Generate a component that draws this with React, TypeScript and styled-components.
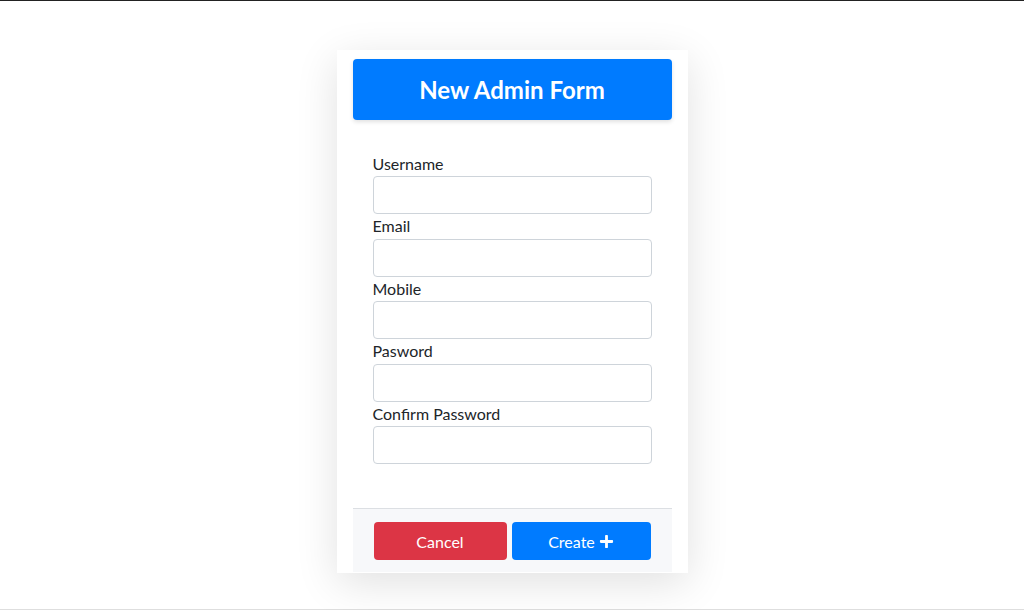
import styled, { createGlobalStyle } from 'styled-components';
import { FaPlus } from 'react-icons/fa';

const GlobalStyle = createGlobalStyle`
  body {
    margin: 0;
    background: #fff;
    font-family: Lato, "Noto Sans", sans-serif;
    color: #212529;
  }
  * { box-sizing: border-box; }
`;

const Page = styled.div`
  height: 610px;
  border-top: 1px solid #222;
  border-bottom: 1px solid #dedede;
  padding-top: 49px;
`;

const Card = styled.div`
  width: 351px;
  margin: 0 auto;
  background: #fff;
  padding: 9px 16px 1px;
  box-shadow: 0 10px 40px rgba(0, 0, 0, 0.12);
`;

const Header = styled.div`
  height: 61px;
  display: flex;
  align-items: center;
  justify-content: center;
  background: #007bff;
  border-radius: 4px;
  box-shadow: 0 2px 4px rgba(0, 0, 0, 0.12);
  color: #fff;
  font-size: 24px;
  font-weight: 700;
`;

const Body = styled.form`
  padding: 32px 20px 44px;
  display: flex;
  flex-direction: column;
`;

const Field = styled.div`
  display: flex;
  flex-direction: column;
`;

const Label = styled.label`
  font-size: 16px;
  line-height: 24.4px;
  color: #212529;
`;

const Input = styled.input`
  height: 38px;
  width: 100%;
  border: 1px solid #ced4da;
  border-radius: 4px;
  padding: 6px 12px;
  font-size: 16px;
  font-family: inherit;
  outline: none;
`;

const Footer = styled.div`
  border-top: 1px solid #dcdfe3;
  background: #f7f8fa;
  padding: 13px 21px 12px;
  display: grid;
  grid-template-columns: 133px 1fr;
  gap: 5px;
`;

const Button = styled.button<{ $variant: 'danger' | 'primary' }>`
  height: 38px;
  border: none;
  border-radius: 4px;
  background: ${(p) => (p.$variant === 'danger' ? '#dc3545' : '#007bff')};
  color: #fff;
  font-size: 16px;
  font-family: inherit;
  display: flex;
  align-items: center;
  justify-content: center;
  gap: 4px;
  cursor: pointer;
`;

const fields = ['Username', 'Email', 'Mobile', 'Pasword', 'Confirm Password'];

export default function App() {
  return (
    <>
      <GlobalStyle />
      <Page>
        <Card>
          <Header>New Admin Form</Header>
          <Body>
            {fields.map((f) => (
              <Field key={f}>
                <Label>{f}</Label>
                <Input type={f.includes('Pas') ? 'password' : 'text'} />
              </Field>
            ))}
          </Body>
          <Footer>
            <Button type="button" $variant="danger">Cancel</Button>
            <Button type="button" $variant="primary">
              Create <FaPlus size={15} />
            </Button>
          </Footer>
        </Card>
      </Page>
    </>
  );
}
